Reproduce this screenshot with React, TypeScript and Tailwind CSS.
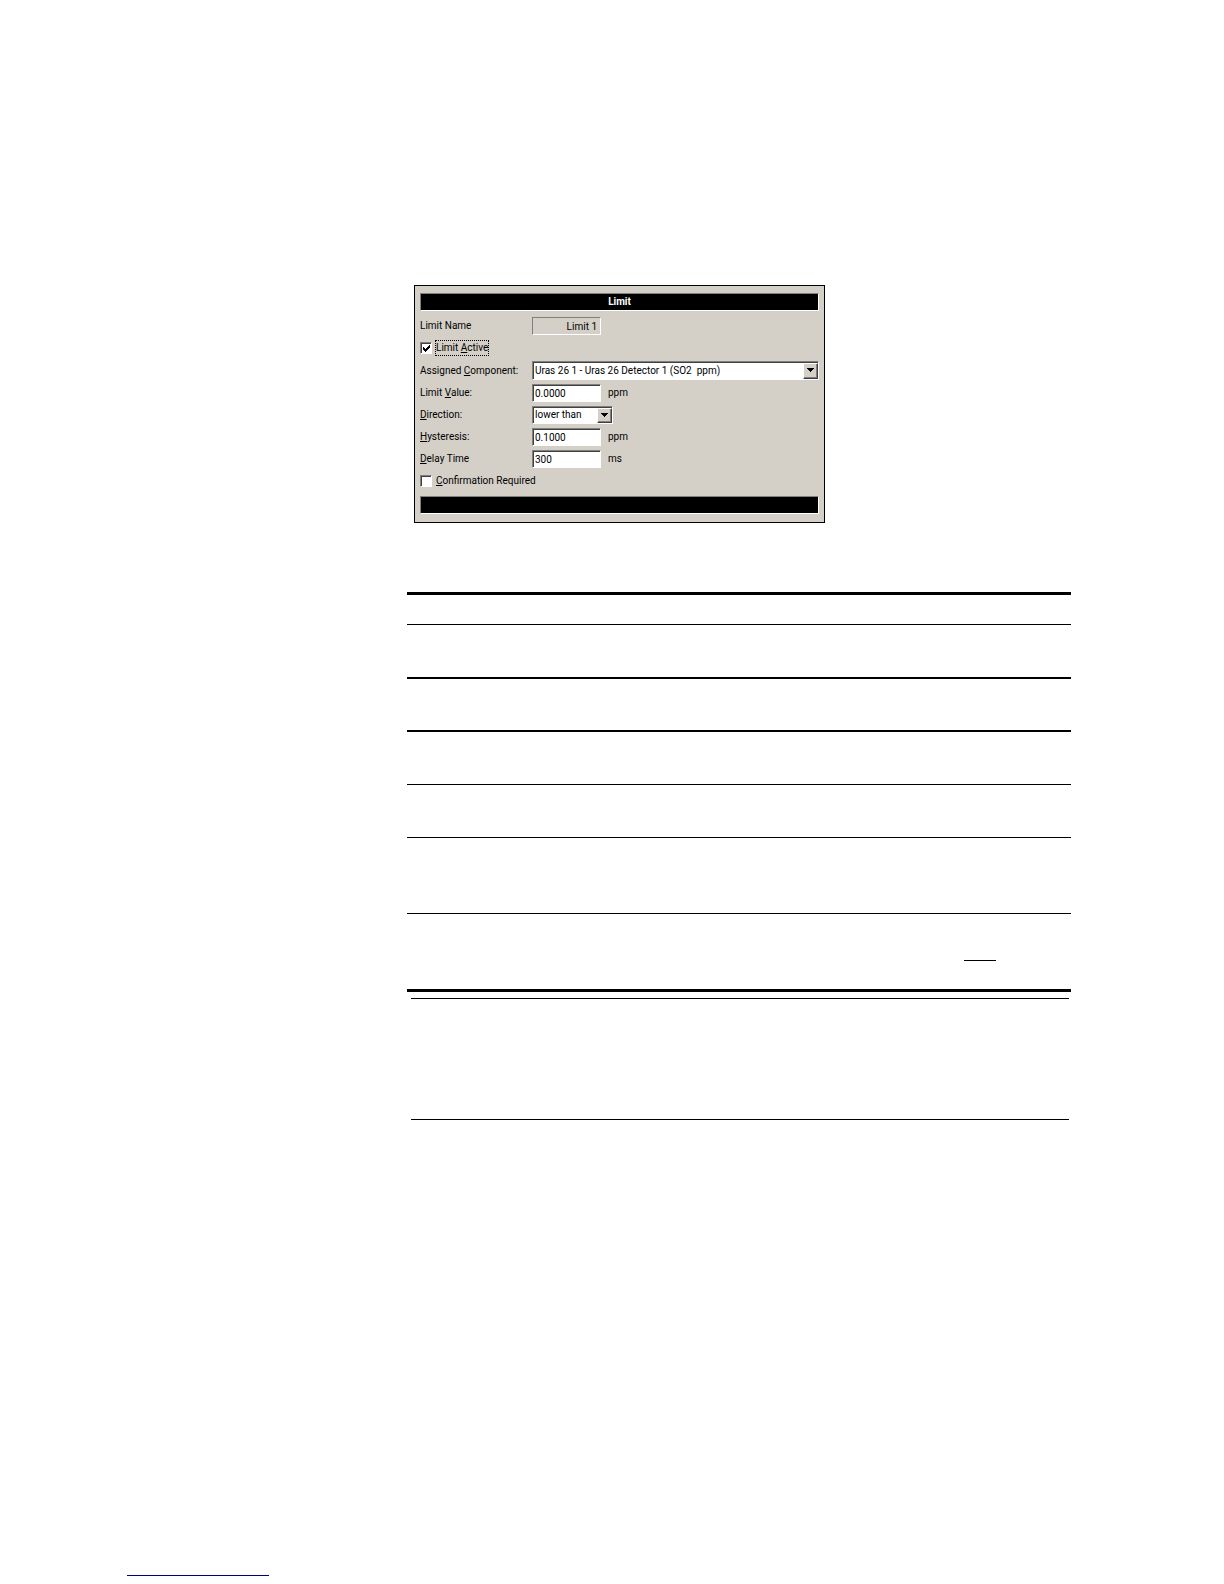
import { ReactNode, useState } from "react";

const bevel =
  "border border-t-[#808080] border-l-[#808080] border-r-white border-b-white";
const sunken = `${bevel} shadow-[inset_1px_1px_0_#404040]`;
const field = `${sunken} h-[18px] w-[69px] bg-white pl-[2px] outline-none`;

function Bar({ children }: { children?: ReactNode }) {
  return (
    <div
      className={`${bevel} flex h-[18px] items-center justify-center bg-black font-bold text-white`}
    >
      {children}
    </div>
  );
}

function Row({
  id,
  label,
  unit,
  children,
}: {
  id: string;
  label: ReactNode;
  unit?: string;
  children: ReactNode;
}) {
  return (
    <div className="flex items-center">
      <label htmlFor={id} className="w-28 shrink-0">
        {label}
      </label>
      {children}
      {unit && <span className="ml-[7px]">{unit}</span>}
    </div>
  );
}

function Select({
  id,
  options,
  className,
}: {
  id: string;
  options: string[];
  className: string;
}) {
  return (
    <div className={`relative ${className}`}>
      <select
        id={id}
        className={`${sunken} block h-full w-full appearance-none bg-white pl-[2px] outline-none`}
      >
        {options.map((option) => (
          <option key={option}>{option}</option>
        ))}
      </select>
      <span className="pointer-events-none absolute top-[2px] right-[1px] bottom-[1px] flex w-[15px] items-center justify-center border border-t-white border-l-white border-r-[#404040] border-b-[#404040] bg-[#d4d0c8] pb-[2px] shadow-[inset_-1px_-1px_0_#808080]">
        <svg width="7" height="4" viewBox="0 0 7 4" shapeRendering="crispEdges">
          <path d="M0 0h7v1H6v1H5v1H4v1H3V3H2V2H1V1H0z" />
        </svg>
      </span>
    </div>
  );
}

function CheckBox({
  defaultChecked,
  focused,
  children,
}: {
  defaultChecked: boolean;
  focused?: boolean;
  children: ReactNode;
}) {
  const [checked, setChecked] = useState(defaultChecked);

  return (
    <label className="flex h-[18px] items-center gap-[3px]">
      <span className="relative h-3 w-3">
        <input
          type="checkbox"
          checked={checked}
          onChange={(e) => setChecked(e.target.checked)}
          className={`${sunken} block h-3 w-3 appearance-none bg-white`}
        />
        {checked && (
          <svg
            className="pointer-events-none absolute top-[3px] left-[3px]"
            width="7"
            height="7"
            viewBox="0 0 7 7"
            shapeRendering="crispEdges"
          >
            <path d="M0 2h1v1h1v1h1V3h1V2h1V1h1V0h1v3H6v1H5v1H4v1H3v1H2V6H1V5H0z" />
          </svg>
        )}
      </span>
      <span
        className={
          focused
            ? "border border-dotted border-black leading-[14px]"
            : "border border-transparent leading-[14px]"
        }
      >
        {children}
      </span>
    </label>
  );
}

function LimitPanel() {
  return (
    <form className="ml-[7px] w-[411px] border border-black bg-[#d4d0c8] px-[5px] pt-[7px] pb-2 font-['Roboto','Liberation_Sans',sans-serif] text-[10px] leading-4 text-black">
      <Bar>Limit</Bar>
      <div className="my-[6px] flex flex-col gap-1">
        <Row id="name" label="Limit Name">
          <input
            id="name"
            readOnly
            defaultValue="Limit 1"
            className={`${bevel} h-[18px] w-[69px] pr-[3px] text-right outline-none`}
          />
        </Row>
        <CheckBox defaultChecked focused>
          Limit <u>A</u>ctive
        </CheckBox>
        <Row
          id="component"
          label={
            <>
              Assigned <u>C</u>omponent:
            </>
          }
        >
          <Select
            id="component"
            className="h-[19px] flex-1"
            options={["Uras 26 1 - Uras 26 Detector 1 (SO2\u00a0 ppm)"]}
          />
        </Row>
        <Row
          id="value"
          unit="ppm"
          label={
            <>
              Limit <u>V</u>alue:
            </>
          }
        >
          <input id="value" defaultValue="0.0000" className={field} />
        </Row>
        <Row
          id="direction"
          label={
            <>
              <u>D</u>irection:
            </>
          }
        >
          <Select
            id="direction"
            className="h-[18px] w-[81px]"
            options={["lower than"]}
          />
        </Row>
        <Row
          id="hysteresis"
          unit="ppm"
          label={
            <>
              <u>H</u>ysteresis:
            </>
          }
        >
          <input id="hysteresis" defaultValue="0.1000" className={field} />
        </Row>
        <Row
          id="delay"
          unit="ms"
          label={
            <>
              <u>D</u>elay Time
            </>
          }
        >
          <input id="delay" defaultValue="300" className={field} />
        </Row>
        <CheckBox defaultChecked={false}>
          <u>C</u>onfirmation Required
        </CheckBox>
      </div>
      <Bar />
    </form>
  );
}

function App() {
  return (
    <main className="bg-white pt-[285px] pb-2">
      <div className="mr-[153px] ml-[407px]">
        <LimitPanel />
        {/* empty ruled rows */}
        <div className="mt-[69px] border-t-3 border-b-3 border-black *:border-black">
          <div className="h-[30px] border-b" />
          <div className="h-[54px] border-b-2" />
          <div className="h-[53px] border-b-2" />
          <div className="h-[53px] border-b" />
          <div className="h-[53px] border-b" />
          <div className="h-[76px] border-b" />
          <div className="flex h-[75px] justify-end pt-[46px] pr-[75px]">
            <div className="h-px w-8 bg-black" />
          </div>
        </div>
        <div className="mt-[6px] mr-[2px] ml-1 h-[122px] border-y border-black" />
      </div>
      <div className="mt-[455px] ml-[127px] h-px w-[142px] bg-[#000080]" />
    </main>
  );
}

export default App;
